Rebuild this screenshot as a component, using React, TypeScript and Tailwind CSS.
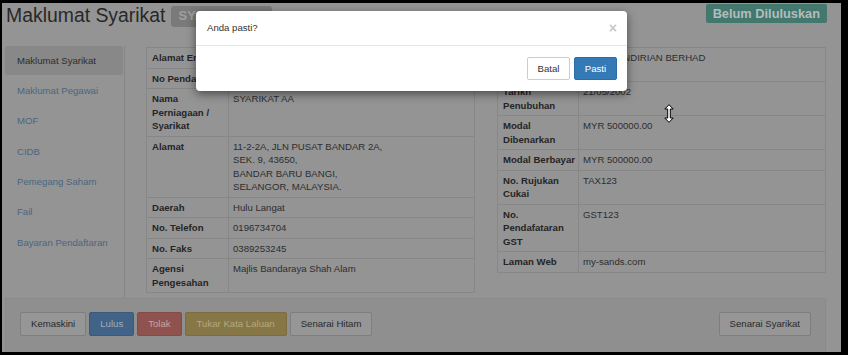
import type React from "react";

type Row = { label: string; value: React.ReactNode; nowrap?: boolean };

const LEFT_ROWS: Row[] = [
  { label: "Alamat Emel", value: "syarikataa@gmail.com" },
  { label: "No Pendaftaran", value: "123456-A" },
  { label: "Nama Perniagaan / Syarikat", value: "SYARIKAT AA" },
  {
    label: "Alamat",
    value: (
      <>
        11-2-2A, JLN PUSAT BANDAR 2A,
        <br />
        SEK. 9, 43650,
        <br />
        BANDAR BARU BANGI,
        <br />
        SELANGOR, MALAYSIA.
      </>
    ),
  },
  { label: "Daerah", value: "Hulu Langat" },
  { label: "No. Telefon", value: "0196734704" },
  { label: "No. Faks", value: "0389253245" },
  { label: "Agensi Pengesahan", value: "Majlis Bandaraya Shah Alam" },
];

const RIGHT_ROWS: Row[] = [
  { label: "Jenis Pendaftaran", value: "SYKT SENDIRIAN BERHAD" },
  { label: "Tarikh Penubuhan", value: "21/05/2002" },
  { label: "Modal Dibenarkan", value: "MYR 500000.00" },
  { label: "Modal Berbayar", value: "MYR 500000.00", nowrap: true },
  { label: "No. Rujukan Cukai", value: "TAX123" },
  { label: "No. Pendafataran GST", value: "GST123" },
  { label: "Laman Web", value: "my-sands.com" },
];

const NAV_ITEMS = [
  "Maklumat Syarikat",
  "Maklumat Pegawai",
  "MOF",
  "CIDB",
  "Pemegang Saham",
  "Fail",
  "Bayaran Pendaftaran",
];

function InfoTable({ rows, labelWidth }: { rows: Row[]; labelWidth: string }) {
  return (
    <table className="w-[329px] table-fixed border-collapse border border-[#878787]">
      <colgroup>
        <col className={labelWidth} />
        <col />
      </colgroup>
      <tbody>
        {rows.map((row) => (
          <tr key={row.label}>
            <th
              className={
                "border border-[#878787] px-[5px] py-[3px] text-left align-top font-bold text-[#252525]" +
                (row.nowrap ? " whitespace-nowrap" : "")
              }
            >
              {row.label}
            </th>
            <td className="border border-[#878787] py-[3px] pl-[4px] pr-[5px] align-top text-[#2e2e2e]">
              {row.value}
            </td>
          </tr>
        ))}
      </tbody>
    </table>
  );
}

function DefaultButton({ children }: { children: React.ReactNode }) {
  return (
    <button className="h-[24px] rounded-[2px] border border-[#7e7e7e] bg-[#969696] px-[10px] text-[#2a2a2a]">
      {children}
    </button>
  );
}

function ResizeCursor() {
  return (
    <svg width="10" height="19" viewBox="0 0 10 19" className="absolute left-[662px] top-[101px]">
      <path
        d="M5 0.7 L9.2 5 L6.3 5 L6.3 14 L9.2 14 L5 18.3 L0.8 14 L3.7 14 L3.7 5 L0.8 5 Z"
        fill="#fff"
        stroke="#000"
        strokeWidth="1"
        strokeLinejoin="round"
      />
    </svg>
  );
}

export default function App() {
  return (
    <div className="h-[355px] w-[848px] overflow-hidden bg-black pb-[3px] pl-[2px] pr-[7px] pt-[3px] font-['Liberation_Sans',Arial,sans-serif] text-[9.6px] leading-[13.5px]">
      <div className="relative h-full overflow-hidden bg-[#949494]">
        {/* page header */}
        <div className="flex items-start pl-[4px] pr-[14px]">
          <h1 className="text-[19.4px] leading-[24px] text-[#282828]">Maklumat Syarikat</h1>
          <span className="ml-[6px] mt-[3px] rounded-[3px] bg-[#7a7a7a] px-[7px] pb-[4px] pt-[3px] text-[13px] font-bold leading-[14px] text-[#a0a0a0]">
            SYARIKAT AA
          </span>
          <span className="ml-auto mt-[1px] rounded-[2px] bg-[#43786f] px-[7px] text-[12.8px] font-bold leading-[19px] text-[#b4bdbb]">
            Belum Diluluskan
          </span>
        </div>

        {/* body */}
        <div className="mt-[19px] flex pl-[3px]">
          <ul className="flex w-[120px] flex-col gap-[1.3px] border-r border-[#868686] pr-[1px]">
            {NAV_ITEMS.map((item, i) => (
              <li
                key={item}
                className={
                  i === 0
                    ? "flex h-[29px] items-center rounded-[3px] bg-[#888888] pl-[12px] text-[#2e2e2e]"
                    : "flex h-[29px] items-center pl-[12px] text-[#4a6682]"
                }
              >
                {item}
              </li>
            ))}
          </ul>
          <div className="ml-[21px] flex gap-[22px] pb-[5px] pt-[1px]">
            <div>
              <InfoTable rows={LEFT_ROWS} labelWidth="w-[82px]" />
            </div>
            <div>
              <InfoTable rows={RIGHT_ROWS} labelWidth="w-[81px]" />
            </div>
          </div>
        </div>

        {/* action bar */}
        <div className="ml-[3px] flex h-[70px] w-[821px] items-start justify-between border border-[#8a8a8a] bg-[#8f8f8f] px-[14px] pt-[13px]">
          <div className="flex gap-[3px]">
            <DefaultButton>Kemaskini</DefaultButton>
            <button className="h-[24px] rounded-[2px] border border-[#3a5b7c] bg-[#406387] px-[10px] text-[#a0adba]">
              Lulus
            </button>
            <button className="h-[24px] rounded-[2px] border border-[#854b48] bg-[#90524f] px-[10px] text-[#c3a4a2]">
              Tolak
            </button>
            <button className="h-[24px] rounded-[2px] border border-[#7c6c40] bg-[#877646] px-[11px] text-[#b6a87f]">
              Tukar Kata Laluan
            </button>
            <DefaultButton>Senarai Hitam</DefaultButton>
          </div>
          <DefaultButton>Senarai Syarikat</DefaultButton>
        </div>

        {/* confirm dialog */}
        <div className="absolute left-[194px] top-[8px] w-[431px] rounded-[4px] bg-white shadow-[0_3px_10px_rgba(0,0,0,0.5)]">
          <div className="flex h-[35px] items-center justify-between border-b border-[#e5e5e5] pl-[11px] pr-[10px] text-[#333]">
            <span>Anda pasti?</span>
            <span className="text-[14px] font-bold leading-[14px] text-[#c8c8c8]">×</span>
          </div>
          <div className="flex h-[45px] items-center justify-end gap-[4px] pr-[10px]">
            <button className="h-[23px] w-[43px] rounded-[2px] border border-[#cccccc] bg-white text-[#333]">
              Batal
            </button>
            <button className="h-[23px] w-[43px] rounded-[2px] border border-[#2e6da4] bg-[#337ab7] text-white">
              Pasti
            </button>
          </div>
        </div>

        <ResizeCursor />
      </div>
    </div>
  );
}
